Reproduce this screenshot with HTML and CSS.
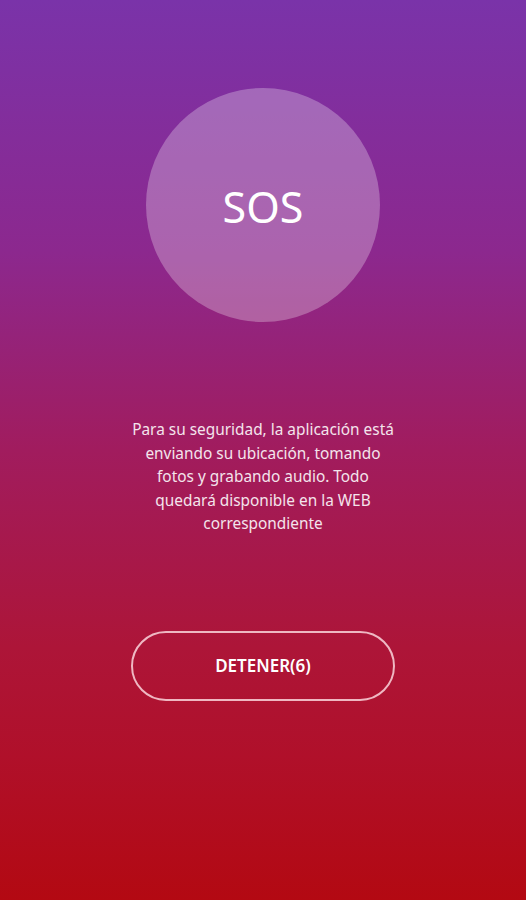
FILE: index.html
```html
<!DOCTYPE html>
<html lang="es">
<head>
<meta charset="utf-8">
<link rel="stylesheet" href="styles.css">
</head>
<body>
<main class="screen">
  <div class="sos-circle"><span class="sos-label">SOS</span></div>
  <p class="message">Para su seguridad, la aplicación está<br>enviando su ubicación, tomando<br>fotos y grabando audio. Todo<br>quedará disponible en la WEB<br>correspondiente</p>
  <button class="stop-button">DETENER(6)</button>
</main>
</body>
</html>
```
FILE: styles.css
```css
html, body {
  margin: 0;
  padding: 0;
}
body {
  width: 526px;
  height: 900px;
  overflow: hidden;
  font-family: "Noto Sans", "Open Sans", sans-serif;
}
.screen {
  height: 900px;
  display: flex;
  flex-direction: column;
  align-items: center;
  background: linear-gradient(to bottom, #7a33a9 0%, #8c288e 28%, #a11c5e 50%, #ad1538 72%, #b0102a 84%, #b30912 100%);
  box-sizing: border-box;
  padding-top: 88px;
}
.sos-circle {
  width: 234px;
  height: 234px;
  border-radius: 50%;
  background: rgba(255, 255, 255, 0.28);
  display: flex;
  align-items: center;
  justify-content: center;
}
.sos-label {
  color: #fff;
  font-size: 43px;
  line-height: 1;
  margin-top: 2px;
}
.message {
  margin: 96px 0 0;
  width: 300px;
  text-align: center;
  color: #f4e4ec;
  font-size: 15.4px;
  line-height: 23.5px;
}
.stop-button {
  margin-top: 95px;
  width: 264px;
  height: 70px;
  border-radius: 35px;
  border: 2px solid rgba(255, 225, 230, 0.8);
  background: transparent;
  color: #fff;
  font-family: "Noto Sans", "Open Sans", sans-serif;
  font-size: 17px;
  font-weight: 600;
  padding: 0;
}
```
